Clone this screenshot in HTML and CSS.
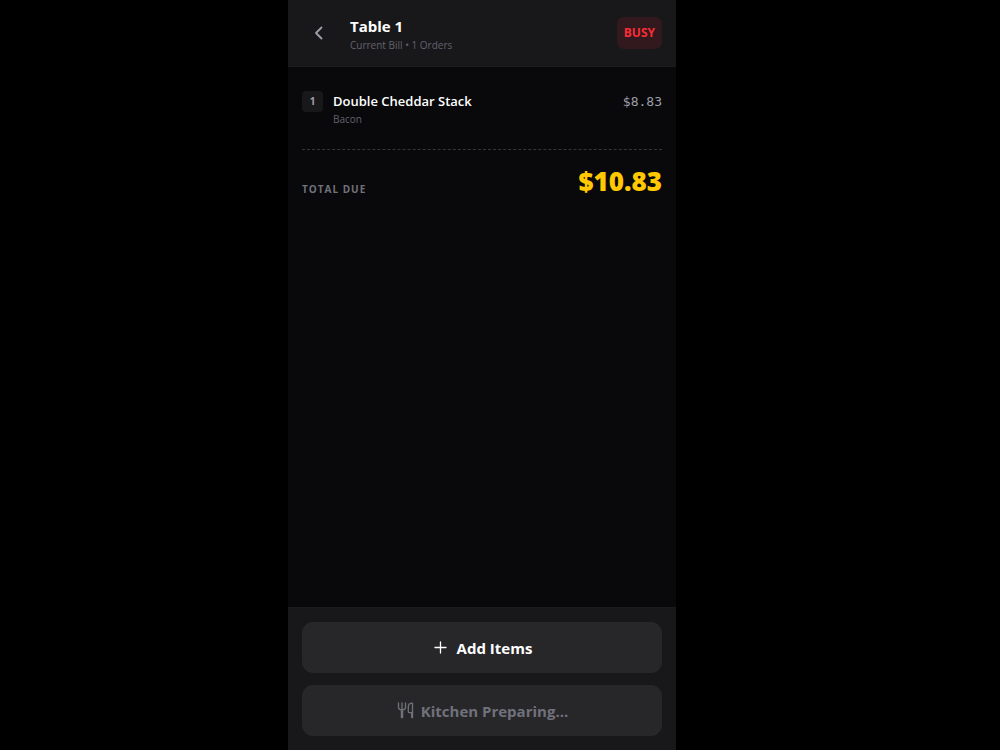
FILE: index.html
```
<!DOCTYPE html>
<html lang="en">
<head>
    <meta charset="UTF-8">
    <meta name="viewport" content="width=device-width, initial-scale=1">
    <title>Table 1</title>
    <link rel="stylesheet" href="styles.css">
</head>
<body>
    <div id="app">
        <header class="top-bar">
            <button class="back-button" aria-label="Back">
                <svg width="20" height="20" viewBox="0 0 20 20" fill="none" stroke="currentColor" stroke-width="1.8" stroke-linecap="round" stroke-linejoin="round"><path d="M12.500 4.500 7 10l5.500 5.500"/></svg>
            </button>
            <div class="table-info">
                <h1>Table 1</h1>
                <p>Current Bill • 1 Orders</p>
            </div>
            <span class="status">BUSY</span>
        </header>

        <main class="bill">
            <ul class="items">
                <li class="item">
                    <span class="qty">1</span>
                    <div class="item-info">
                        <h2>Double Cheddar Stack</h2>
                        <p>Bacon</p>
                    </div>
                    <span class="price">$8.83</span>
                </li>
            </ul>
            <div class="total">
                <span class="total-label">TOTAL DUE</span>
                <span class="total-price">$10.83</span>
            </div>
        </main>

        <footer class="actions">
            <button class="action-button">
                <svg width="18" height="18" viewBox="0 0 18 18" fill="none" stroke="currentColor" stroke-width="1.3" stroke-linecap="round"><path d="M8.500 3v11M3 8.500h11"/></svg>
                Add Items
            </button>
            <button class="action-button" disabled>
                <svg width="18" height="18" viewBox="0 0 18 18" fill="none" stroke="currentColor" stroke-width="1.3" stroke-linecap="round" stroke-linejoin="round"><path d="M2.500 1v4.500c0 1.500 1.200 2.300 3.500 2.300s3.500-.8 3.500-2.300V1M6 1v6M5.400 8v7.500h1.200V8M16.500 15.500V1.200c-2.600 0-4.200 1.300-4.200 3.800v4.500c0 .8.400 1.200 1.200 1.200h2.200v4.800z"/></svg>
                Kitchen Preparing...
            </button>
        </footer>
    </div>
</body>
</html>
```
FILE: styles.css
```
* {
    box-sizing: border-box;
}
body {
    font-family: "Open Sans", "Noto Sans", sans-serif;
    background-color: #000;
    color: #fff;
    margin: 0;
    padding-right: 36px;
}
h1, h2, p, ul {
    margin: 0;
    padding: 0;
}
button {
    font-family: inherit;
    border: none;
    cursor: pointer;
}
#app {
    background-color: #09090b;
    max-width: 388px;
    min-height: 100vh;
    margin: 0 auto;
    display: flex;
    flex-direction: column;
}

/* Header */
.top-bar {
    display: flex;
    align-items: center;
    padding: 14px;
    background-color: #18181b;
    border-bottom: 1px solid #1c1c1f;
}
.back-button {
    display: flex;
    padding: 7px;
    margin-right: 14px;
    background: none;
    color: #9f9fa9;
}
.table-info {
    flex: 1;
    padding-top: 2px;
}
h1 {
    font-size: 15px;
    line-height: 20px;
    font-weight: 700;
}
.table-info p {
    font-size: 10px;
    line-height: 14px;
    margin-top: 2px;
    color: #62626c;
}
.status {
    padding: 8px 7px;
    border-radius: 7px;
    background-color: #32191d;
    color: #fb2c36;
    font-size: 12px;
    line-height: 16px;
    font-weight: 700;
}

/* Bill */
.bill {
    flex: 1;
    padding: 24px 14px;
}
.items {
    list-style: none;
    padding-bottom: 22px;
    border-bottom: 1px dashed #36363a;
}
.item {
    display: flex;
    align-items: flex-start;
}
.qty {
    width: 21px;
    margin-right: 10px;
    border-radius: 4px;
    background-color: #18181b;
    color: #9f9fa9;
    font-size: 10px;
    line-height: 21px;
    font-weight: 700;
    text-align: center;
}
.item-info {
    flex: 1;
}
h2 {
    font-size: 13px;
    line-height: 20px;
    font-weight: 600;
}
.item-info p {
    font-size: 10px;
    line-height: 16px;
    color: #62626c;
}
.price {
    font-family: "DejaVu Sans Mono", monospace;
    font-size: 13px;
    line-height: 21px;
    color: #9f9fa9;
}
.total {
    display: flex;
    justify-content: space-between;
    align-items: flex-end;
    padding-top: 14px;
}
.total-label {
    font-size: 10px;
    line-height: 18px;
    font-weight: 700;
    letter-spacing: 1px;
    color: #71717b;
}
.total-price {
    font-size: 26px;
    line-height: 34px;
    font-weight: 800;
    color: #ffc800;
}

/* Buttons at the bottom */
.actions {
    display: flex;
    flex-direction: column;
    gap: 12px;
    padding: 14px;
    background-color: #18181b;
    border-top: 1px solid #1b1b1e;
}
.action-button {
    display: flex;
    align-items: center;
    justify-content: center;
    gap: 7px;
    height: 51px;
    border-radius: 11px;
    background-color: #27272a;
    color: #fff;
    font-size: 15px;
    font-weight: 700;
}
.action-button:disabled {
    color: #71717b;
    cursor: default;
}
```
